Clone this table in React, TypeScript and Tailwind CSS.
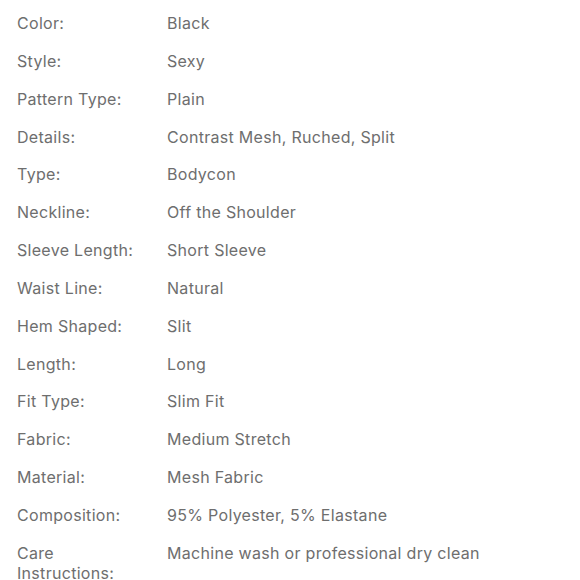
import React from "react"

const specs: [string, string][] = [
  ["Color:", "Black"],
  ["Style:", "Sexy"],
  ["Pattern Type:", "Plain"],
  ["Details:", "Contrast Mesh, Ruched, Split"],
  ["Type:", "Bodycon"],
  ["Neckline:", "Off the Shoulder"],
  ["Sleeve Length:", "Short Sleeve"],
  ["Waist Line:", "Natural"],
  ["Hem Shaped:", "Slit"],
  ["Length:", "Long"],
  ["Fit Type:", "Slim Fit"],
  ["Fabric:", "Medium Stretch"],
  ["Material:", "Mesh Fabric"],
  ["Composition:", "95% Polyester, 5% Elastane"],
  ["Care Instructions:", "Machine wash or professional dry clean"],
]

export default function App() {
  return (
    <div className="w-[580px] h-[580px] overflow-hidden bg-white font-['Inter','Liberation_Sans',sans-serif] text-[16px] leading-[20px] tracking-[0.3px] text-[#6e6e6e]">
      <div className="grid grid-cols-[125px_1fr] gap-x-[25px] gap-y-[17.85px] pl-[17px] pt-[13px]">
        {specs.map(([label, value]) => (
          <React.Fragment key={label}>
            <div>{label}</div>
            <div>{value}</div>
          </React.Fragment>
        ))}
      </div>
    </div>
  )
}
